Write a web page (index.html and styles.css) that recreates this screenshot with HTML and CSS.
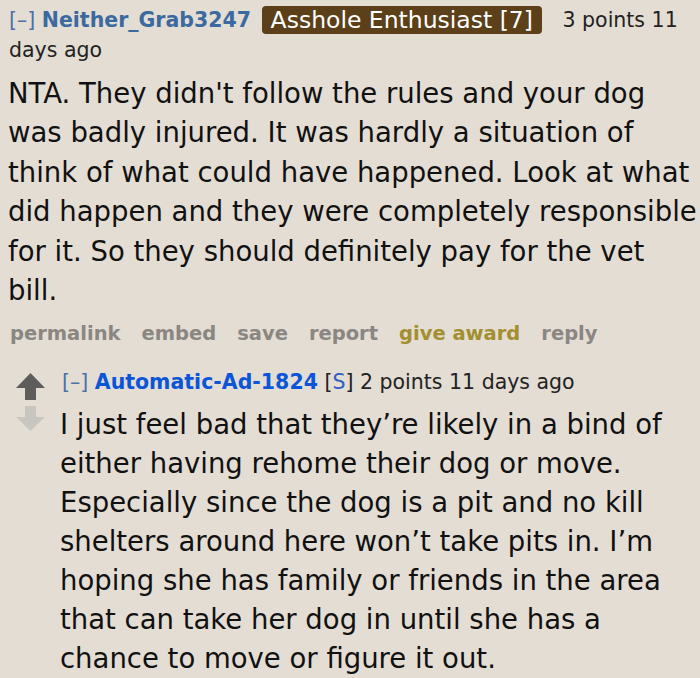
FILE: index.html
```html
<!DOCTYPE html>
<html>
<head>
<meta charset="utf-8">
<link rel="stylesheet" href="styles.css">
</head>
<body>
<div class="comment">
  <div class="tagline">
    <span class="expand">[–]</span> <span class="author">Neither_Grab3247</span> <span class="flair">Asshole Enthusiast [7]</span> <span class="score">3 points</span> <span class="time">11 days ago</span>
  </div>
  <div class="body">
    <p>NTA. They didn't follow the rules and your dog<br>was badly injured. It was hardly a situation of<br>think of what could have happened. Look at what<br>did happen and they were completely responsible<br>for it. So they should definitely pay for the vet<br>bill.</p>
  </div>
  <ul class="buttons">
    <li>permalink</li>
    <li>embed</li>
    <li>save</li>
    <li>report</li>
    <li class="award">give award</li>
    <li>reply</li>
  </ul>
  <div class="child">
    <div class="arrows">
      <svg class="arrow up" viewBox="0 0 29 27" width="29" height="27"><path d="M14.5 0 L29 15 L20 15 L20 27 L9 27 L9 15 L0 15 Z"/></svg>
      <svg class="arrow down" viewBox="0 0 29 25" width="29" height="25"><path d="M9 0 L20 0 L20 11 L29 11 L14.5 25 L0 11 L9 11 Z"/></svg>
    </div>
    <div class="entry">
      <div class="tagline small">
        <span class="expand">[–]</span> <span class="author submitter">Automatic-Ad-1824</span> <span class="sub">[<span class="s">S</span>]</span> <span class="score">2 points 11 days ago</span>
      </div>
      <div class="body">
        <p>I just feel bad that they’re likely in a bind of<br>either having rehome their dog or move.<br>Especially since the dog is a pit and no kill<br>shelters around here won’t take pits in. I’m<br>hoping she has family or friends in the area<br>that can take her dog in until she has a<br>chance to move or figure it out.</p>
      </div>
    </div>
  </div>
</div>
</body>
</html>
```
FILE: styles.css
```css
html, body {
  margin: 0;
  padding: 0;
  background: #e3ddd4;
  overflow: hidden;
}
body {
  font-family: "DejaVu Sans", Verdana, sans-serif;
  color: #111;
}
.comment {
  padding: 5px 0 0 8px;
  width: 672px;
}
.tagline {
  font-family: "DejaVu Sans", sans-serif;
  font-size: 20.5px;
  line-height: 30px;
  padding-left: 1px;
  color: #222;
}
.expand {
  color: #4a72a8;
}
.author {
  font-weight: bold;
  color: #3b6aa0;
}
.flair {
  display: inline-block;
  background: #5b4019;
  color: #fff;
  font-size: 23.5px;
  line-height: 28px;
  padding: 0 9px;
  border-radius: 4px;
  margin: 0 14px 0 4px;
  vertical-align: -1px;
}
.body p {
  margin: 0;
  font-size: 27.5px;
  line-height: 39.4px;
  white-space: nowrap;
}
.comment > .body {
  margin-top: 9px;
}
.buttons {
  list-style: none;
  margin: 12px 0 0 2px;
  padding: 0;
  display: flex;
  gap: 21px;
  font-weight: bold;
  font-size: 19.5px;
  line-height: 24px;
  color: #8a8682;
}
.buttons .award {
  color: #a38f2f;
}
.child {
  display: flex;
  margin-top: 24px;
  margin-left: 8px;
}
.arrows {
  width: 44px;
  display: flex;
  flex-direction: column;
  align-items: flex-start;
  padding-top: 3px;
  gap: 6px;
}
.arrow.up { fill: #5e5d5c; }
.arrow.down { fill: #c9c5c0; }
.entry {
  flex: 1;
}
.tagline.small {
  font-size: 20.5px;
  line-height: 24px;
  padding-left: 2px;
}
.submitter {
  color: #0b55d8;
}
.sub {
  color: #222;
}
.s {
  color: #2f5fc4;
}
.entry .body {
  margin-top: 11px;
}
.entry .body p {
  line-height: 39px;
}
```
